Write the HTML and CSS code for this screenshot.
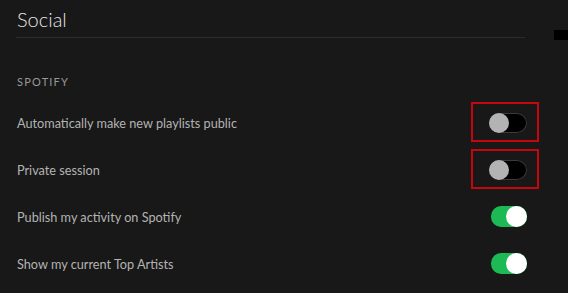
FILE: index.html
```html
<!DOCTYPE html>
<html lang="en">
<head>
    <meta charset="UTF-8">
    <meta name="viewport" content="width=device-width, initial-scale=1.0">
    <title>Settings - Social</title>
    <link rel="stylesheet" href="styles.css">
</head>
<body>

<div class="settings">
    <h1 class="settings-title">Social</h1>

    <div class="section">
        <h2 class="section-label">Spotify</h2>

        <div class="row">
            <span class="row-label">Automatically make new playlists public</span>
            <span class="toggle marked"><span class="knob"></span></span>
        </div>
        <div class="row">
            <span class="row-label">Private session</span>
            <span class="toggle marked"><span class="knob"></span></span>
        </div>
        <div class="row">
            <span class="row-label">Publish my activity on Spotify</span>
            <span class="toggle on"><span class="knob"></span></span>
        </div>
        <div class="row">
            <span class="row-label">Show my current Top Artists</span>
            <span class="toggle on"><span class="knob"></span></span>
        </div>
    </div>
</div>

<div class="scroll-nub"></div>

</body>
</html>
```

FILE: styles.css
```css
body {
    font-family: "Lato", "Liberation Sans", Arial, sans-serif;
    background-color: #181818;
    margin: 0;
    color: #b3b3b3;
}

.settings {
    width: 511px;
    padding: 6px 0 0 16px;
}

.settings-title {
    margin: 0;
    font-size: 20px;
    font-weight: 300;
    line-height: 26px;
    color: #e6e6e6;
    padding: 0 0 5px 1px;
    border-bottom: 1px solid #2c2c2c;
    width: 508px;
}

.section { margin-top: 35px; }

.section-label {
    margin: 0 0 8px 1px;
    font-size: 11px;
    font-weight: 400;
    letter-spacing: 1.2px;
    text-transform: uppercase;
    color: #999;
    line-height: 18px;
}

.row {
    display: flex;
    justify-content: space-between;
    align-items: center;
    height: 47px;
}
.row-label {
    font-size: 12.7px;
    padding-left: 1px;
    color: #b3b3b3;
}

.toggle {
    position: relative;
    display: block;
    width: 38px;
    height: 20px;
    border-radius: 10px;
    background: #000;
    box-shadow: inset 0 0 0 1px #3a3a3a;
    box-sizing: border-box;
}
.toggle .knob {
    position: absolute;
    left: 0;
    top: 0;
    width: 20px;
    height: 20px;
    border-radius: 50%;
    background: #b3b3b3;
}
.toggle.on {
    width: 36px;
    height: 21px;
    background: #1db954;
    box-shadow: none;
}
.toggle.on .knob {
    left: auto;
    right: 0;
    width: 21px;
    height: 21px;
    background: #fff;
}

.marked::after {
    content: "";
    position: absolute;
    top: -11px;
    right: -12px;
    bottom: -9px;
    left: -18px;
    border: 2px solid #c4070d;
}

.scroll-nub {
    position: absolute;
    top: 30px;
    right: 0;
    width: 14px;
    height: 10px;
    background: #000;
}
```
